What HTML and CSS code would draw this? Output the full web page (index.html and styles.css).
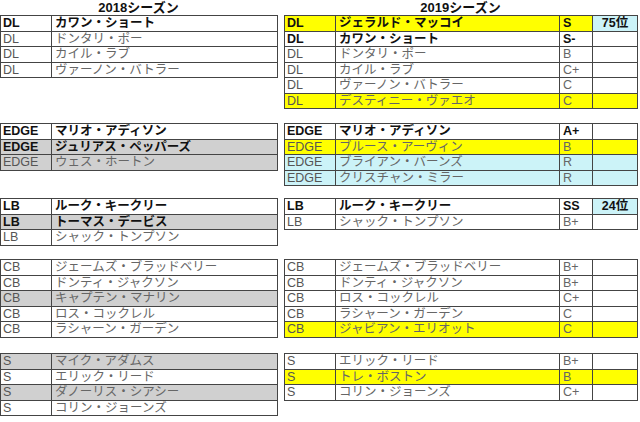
FILE: index.html
```html
<!DOCTYPE html>
<html lang="ja">
<head>
<meta charset="utf-8">
<link rel="stylesheet" href="styles.css">
</head>
<body>
<div class="sheet">
  <div class="title">2018シーズン</div>
  <div class="title">2019シーズン</div>

  <table class="t t18">
    <colgroup><col class="c-pos"><col class="c-name18"></colgroup>
    <tr class="b"><td>DL</td><td>カワン・ショート</td></tr>
    <tr><td>DL</td><td>ドンタリ・ポー</td></tr>
    <tr><td>DL</td><td>カイル・ラブ</td></tr>
    <tr><td>DL</td><td>ヴァーノン・バトラー</td></tr>
  </table>
  <table class="t t19">
    <colgroup><col class="c-pos"><col class="c-name19"><col class="c-grade"><col class="c-rank"></colgroup>
    <tr class="b"><td class="y">DL</td><td class="y">ジェラルド・マッコイ</td><td class="y">S</td><td class="rank">75位</td></tr>
    <tr class="b"><td>DL</td><td>カワン・ショート</td><td>S-</td><td></td></tr>
    <tr><td>DL</td><td>ドンタリ・ポー</td><td>B</td><td></td></tr>
    <tr><td>DL</td><td>カイル・ラブ</td><td>C+</td><td></td></tr>
    <tr><td>DL</td><td>ヴァーノン・バトラー</td><td>C</td><td></td></tr>
    <tr class="yr"><td>DL</td><td>デスティニー・ヴァエオ</td><td>C</td><td></td></tr>
  </table>

  <table class="t t18">
    <colgroup><col class="c-pos"><col class="c-name18"></colgroup>
    <tr class="b"><td>EDGE</td><td>マリオ・アディソン</td></tr>
    <tr class="b gr"><td>EDGE</td><td>ジュリアス・ペッパーズ</td></tr>
    <tr class="gr"><td>EDGE</td><td>ウェス・ホートン</td></tr>
  </table>
  <table class="t t19">
    <colgroup><col class="c-pos"><col class="c-name19"><col class="c-grade"><col class="c-rank"></colgroup>
    <tr class="b"><td>EDGE</td><td>マリオ・アディソン</td><td>A+</td><td></td></tr>
    <tr class="yr"><td>EDGE</td><td>ブルース・アーヴィン</td><td>B</td><td></td></tr>
    <tr class="br"><td>EDGE</td><td>ブライアン・バーンズ</td><td>R</td><td></td></tr>
    <tr class="br"><td>EDGE</td><td>クリスチャン・ミラー</td><td>R</td><td></td></tr>
  </table>

  <table class="t t18">
    <colgroup><col class="c-pos"><col class="c-name18"></colgroup>
    <tr class="b"><td>LB</td><td>ルーク・キークリー</td></tr>
    <tr class="b gr"><td>LB</td><td>トーマス・デービス</td></tr>
    <tr><td>LB</td><td>シャック・トンプソン</td></tr>
  </table>
  <table class="t t19">
    <colgroup><col class="c-pos"><col class="c-name19"><col class="c-grade"><col class="c-rank"></colgroup>
    <tr class="b"><td>LB</td><td>ルーク・キークリー</td><td>SS</td><td class="rank">24位</td></tr>
    <tr><td>LB</td><td>シャック・トンプソン</td><td>B+</td><td></td></tr>
  </table>

  <table class="t t18">
    <colgroup><col class="c-pos"><col class="c-name18"></colgroup>
    <tr><td>CB</td><td>ジェームズ・ブラッドベリー</td></tr>
    <tr><td>CB</td><td>ドンティ・ジャクソン</td></tr>
    <tr class="gr"><td>CB</td><td>キャプテン・マナリン</td></tr>
    <tr><td>CB</td><td>ロス・コックレル</td></tr>
    <tr><td>CB</td><td>ラシャーン・ガーデン</td></tr>
  </table>
  <table class="t t19">
    <colgroup><col class="c-pos"><col class="c-name19"><col class="c-grade"><col class="c-rank"></colgroup>
    <tr><td>CB</td><td>ジェームズ・ブラッドベリー</td><td>B+</td><td></td></tr>
    <tr><td>CB</td><td>ドンティ・ジャクソン</td><td>B+</td><td></td></tr>
    <tr><td>CB</td><td>ロス・コックレル</td><td>C+</td><td></td></tr>
    <tr><td>CB</td><td>ラシャーン・ガーデン</td><td>C</td><td></td></tr>
    <tr class="yr"><td>CB</td><td>ジャビアン・エリオット</td><td>C</td><td></td></tr>
  </table>

  <table class="t t18">
    <colgroup><col class="c-pos"><col class="c-name18"></colgroup>
    <tr class="gr"><td>S</td><td>マイク・アダムス</td></tr>
    <tr><td>S</td><td>エリック・リード</td></tr>
    <tr class="gr"><td>S</td><td>ダノーリス・シアシー</td></tr>
    <tr><td>S</td><td>コリン・ジョーンズ</td></tr>
  </table>
  <table class="t t19">
    <colgroup><col class="c-pos"><col class="c-name19"><col class="c-grade"><col class="c-rank"></colgroup>
    <tr><td>S</td><td>エリック・リード</td><td>B+</td><td></td></tr>
    <tr class="yr"><td>S</td><td>トレ・ボストン</td><td>B</td><td></td></tr>
    <tr><td>S</td><td>コリン・ジョーンズ</td><td>C+</td><td></td></tr>
  </table>
</div>
</body>
</html>
```

FILE: styles.css
```css
html, body {
  margin: 0;
  padding: 0;
  background: #ffffff;
}

body {
  font-family: "Liberation Sans", "Noto Sans CJK JP", sans-serif;
  font-size: 12.5px;
  color: #555555;
}

.sheet {
  display: grid;
  grid-template-columns: 277px 353px;
  grid-template-rows: 15px 108px 75px 61px 94px auto;
  column-gap: 7px;
  align-items: start;
}

.title {
  font-weight: bold;
  font-size: 13px;
  color: #111111;
  text-align: center;
  line-height: 15px;
  height: 15px;
}

.t {
  border-collapse: collapse;
  table-layout: fixed;
  border: 1px solid #333333;
}

.t18 { width: 277px; }
.t19 { width: 353px; }

.c-pos { width: 51px; }
.c-name18 { width: 226px; }
.c-name19 { width: 224px; }
.c-grade { width: 33px; }
.c-rank { width: 45px; }

.t tr {
  height: 15.5px;
}

.t td {
  border: 1px solid #444444;
  padding: 0 0 0 2px;
  height: 14.5px;
  line-height: 14px;
  white-space: nowrap;
  overflow: hidden;
  vertical-align: middle;
}

.t td + td {
  padding-left: 3px;
  color: #666666;
}

.b td,
.t .b td + td {
  font-weight: bold;
  color: #111111;
}

.gr td { background: #d0d0d0; }
.yr td, td.y { background: #ffff00; }
.br td { background: #ccf3f8; }

.t td.rank {
  background: #ccf3f8;
  text-align: center;
  padding: 0;
  font-weight: bold;
  color: #111111;
}
```
